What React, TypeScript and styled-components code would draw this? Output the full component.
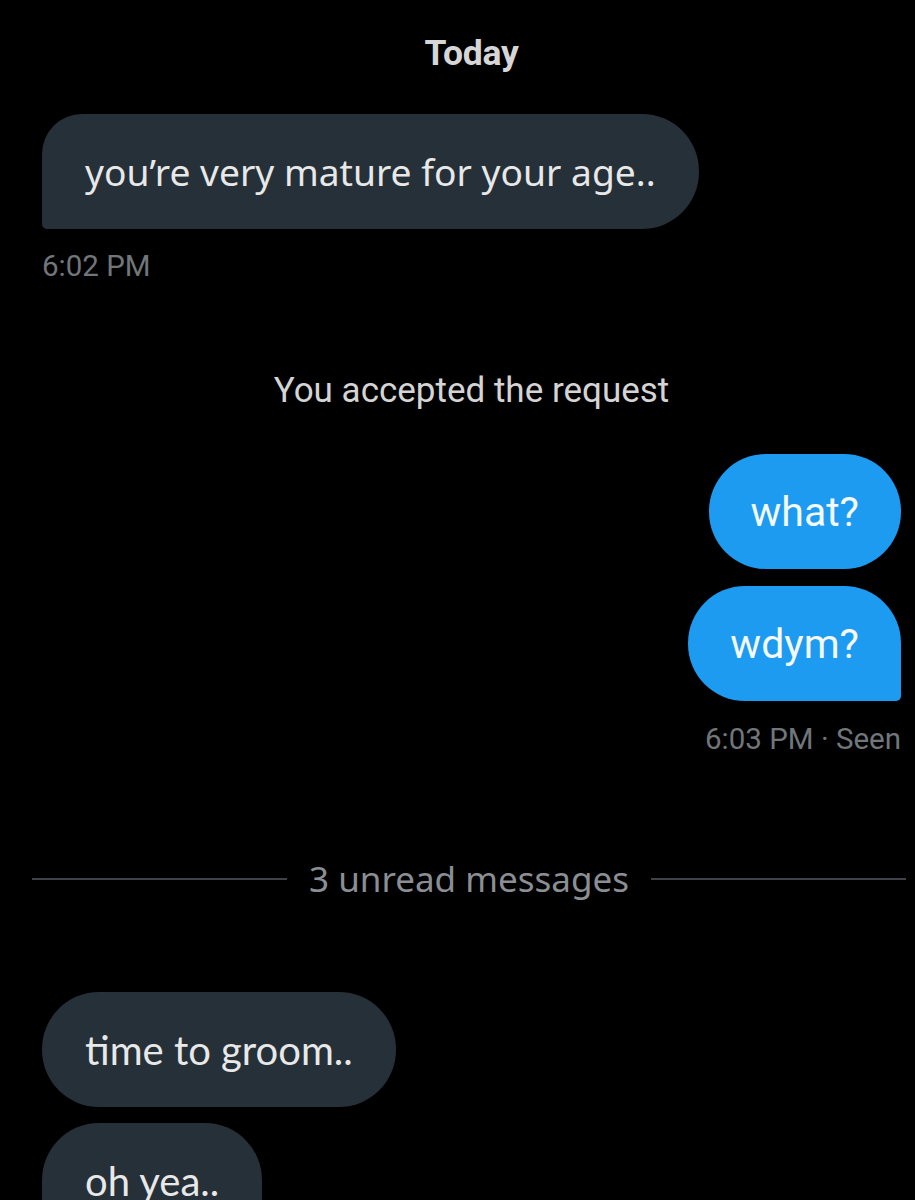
import React from "react";
import styled, { createGlobalStyle, css } from "styled-components";

const Global = createGlobalStyle`
  html, body { margin: 0; padding: 0; background: #000; }
  body { width: 915px; height: 1200px; overflow: hidden; }
`;

const Page = styled.div`
  width: 915px;
  height: 1200px;
  background: #000;
  display: flex;
  flex-direction: column;
  padding: 0 14px 0 42px;
  box-sizing: border-box;
  overflow: hidden;
`;

const DayLabel = styled.div`
  font-family: Roboto, "Liberation Sans", sans-serif;
  font-weight: 700;
  font-size: 35.5px;
  line-height: 40px;
  color: #d6d6d6;
  text-align: center;
  letter-spacing: -0.3px;
  margin-top: 33px;
`;

const Row = styled.div<{ $mine?: boolean; $mt: number }>`
  display: flex;
  justify-content: ${(p) => (p.$mine ? "flex-end" : "flex-start")};
  margin-top: ${(p) => p.$mt}px;
`;

type Shape = "pill" | "firstIn" | "lastOut" | "topOnly";

const Bubble = styled.div<{ $mine?: boolean; $shape: Shape; $font: string; $size: number; $px: number }>`
  box-sizing: border-box;
  height: 115px;
  display: flex;
  align-items: center;
  padding: 0 ${(p) => p.$px}px;
  font-family: ${(p) => p.$font};
  font-size: ${(p) => p.$size}px;
  white-space: nowrap;
  color: #e8e8e8;
  background: ${(p) => (p.$mine ? "#1d9bf0" : "#253038")};
  ${(p) => p.$mine && css`color: #f4f9fd;`}
  ${(p) =>
    p.$shape === "pill"
      ? css`border-radius: 57px;`
      : p.$shape === "firstIn"
      ? css`border-radius: 40px 57px 57px 5px;`
      : p.$shape === "lastOut"
      ? css`border-radius: 57px 57px 5px 57px;`
      : css`border-radius: 57px 57px 0 0;`}
`;

const Meta = styled.div<{ $mine?: boolean; $mt: number }>`
  font-family: Roboto, "Liberation Sans", sans-serif;
  font-size: 29.5px;
  line-height: 34px;
  color: #71767b;
  margin-top: ${(p) => p.$mt}px;
  text-align: ${(p) => (p.$mine ? "right" : "left")};
`;

const Notice = styled.div`
  font-family: Roboto, "Liberation Sans", sans-serif;
  font-size: 35px;
  line-height: 42px;
  color: #d4d4d4;
  text-align: center;
  margin-top: 87px;
`;

const Divider = styled.div`
  display: flex;
  align-items: center;
  gap: 22px;
  margin: 102px -5px 0 -10px;
  font-family: "Noto Sans", sans-serif;
  font-size: 35px;
  line-height: 42px;
  color: #8b8f94;
  &::before, &::after {
    content: "";
    flex: 1;
    height: 2px;
    background: #3f4347;
  }
`;

export default function App() {
  return (
    <>
      <Global />
      <Page>
        <DayLabel>Today</DayLabel>
        <Row $mt={41}>
          <Bubble $shape="firstIn" $font={`"Noto Sans", sans-serif`} $size={37.2} $px={43}>
            you’re very mature for your age..
          </Bubble>
        </Row>
        <Meta $mt={20}>6:02 PM</Meta>
        <Notice>You accepted the request</Notice>
        <Row $mine $mt={42}>
          <Bubble $mine $shape="pill" $font={`Roboto, sans-serif`} $size={41} $px={42}>
            what?
          </Bubble>
        </Row>
        <Row $mine $mt={17}>
          <Bubble $mine $shape="lastOut" $font={`Roboto, sans-serif`} $size={41} $px={42}>
            wdym?
          </Bubble>
        </Row>
        <Meta $mine $mt={21}>6:03 PM · Seen</Meta>
        <Divider>3 unread messages</Divider>
        <Row $mt={92}>
          <Bubble $shape="pill" $font={`Lato, sans-serif`} $size={40} $px={43}>
            time to groom..
          </Bubble>
        </Row>
        <Row $mt={16}>
          <Bubble $shape="topOnly" $font={`Lato, sans-serif`} $size={40} $px={43}>
            oh yea..
          </Bubble>
        </Row>
      </Page>
    </>
  );
}
